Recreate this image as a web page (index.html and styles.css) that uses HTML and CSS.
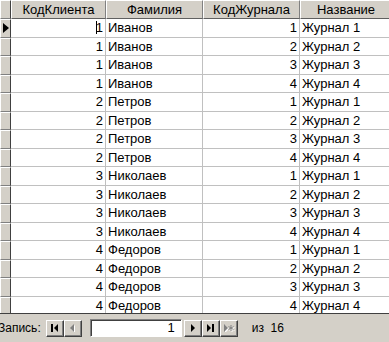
FILE: index.html
```html
<!DOCTYPE html>
<html>
<head>
<meta charset="utf-8">
<link rel="stylesheet" href="styles.css">
</head>
<body>
<div class="grid-wrap">
<table class="grid">
<colgroup><col class="c0"><col class="c1"><col class="c2"><col class="c3"><col class="c4"></colgroup>
<thead>
<tr><th class="sel"></th><th>КодКлиента</th><th>Фамилия</th><th>КодЖурнала</th><th>Название</th></tr>
</thead>
<tbody>
<tr><td class="sel cur"><span class="arrow"></span></td><td class="num"><span class="caret"></span>1</td><td>Иванов</td><td class="num">1</td><td>Журнал 1</td></tr>
<tr><td class="sel"></td><td class="num">1</td><td>Иванов</td><td class="num">2</td><td>Журнал 2</td></tr>
<tr><td class="sel"></td><td class="num">1</td><td>Иванов</td><td class="num">3</td><td>Журнал 3</td></tr>
<tr><td class="sel"></td><td class="num">1</td><td>Иванов</td><td class="num">4</td><td>Журнал 4</td></tr>
<tr><td class="sel"></td><td class="num">2</td><td>Петров</td><td class="num">1</td><td>Журнал 1</td></tr>
<tr><td class="sel"></td><td class="num">2</td><td>Петров</td><td class="num">2</td><td>Журнал 2</td></tr>
<tr><td class="sel"></td><td class="num">2</td><td>Петров</td><td class="num">3</td><td>Журнал 3</td></tr>
<tr><td class="sel"></td><td class="num">2</td><td>Петров</td><td class="num">4</td><td>Журнал 4</td></tr>
<tr><td class="sel"></td><td class="num">3</td><td>Николаев</td><td class="num">1</td><td>Журнал 1</td></tr>
<tr><td class="sel"></td><td class="num">3</td><td>Николаев</td><td class="num">2</td><td>Журнал 2</td></tr>
<tr><td class="sel"></td><td class="num">3</td><td>Николаев</td><td class="num">3</td><td>Журнал 3</td></tr>
<tr><td class="sel"></td><td class="num">3</td><td>Николаев</td><td class="num">4</td><td>Журнал 4</td></tr>
<tr><td class="sel"></td><td class="num">4</td><td>Федоров</td><td class="num">1</td><td>Журнал 1</td></tr>
<tr><td class="sel"></td><td class="num">4</td><td>Федоров</td><td class="num">2</td><td>Журнал 2</td></tr>
<tr><td class="sel"></td><td class="num">4</td><td>Федоров</td><td class="num">3</td><td>Журнал 3</td></tr>
<tr><td class="sel"></td><td class="num">4</td><td>Федоров</td><td class="num">4</td><td>Журнал 4</td></tr>
</tbody>
</table>
</div>
<div class="nav">
  <span class="label">Запись:</span>
  <span class="btn"><svg width="9" height="8" viewBox="0 0 9 8"><rect x="1" y="0" width="2" height="8" fill="#000"/><polygon points="8,0 8,8 4,4" fill="#000"/></svg></span>
  <span class="btn"><svg width="9" height="8" viewBox="0 0 9 8"><polygon points="6,0 6,8 2,4" fill="#fff" transform="translate(1,1)"/><polygon points="6,0 6,8 2,4" fill="#808080"/></svg></span>
  <span class="field">1</span>
  <span class="btn"><svg width="9" height="8" viewBox="0 0 9 8"><polygon points="3,0 3,8 7,4" fill="#000"/></svg></span>
  <span class="btn"><svg width="9" height="8" viewBox="0 0 9 8"><polygon points="1,0 1,8 5,4" fill="#000"/><rect x="6" y="0" width="2" height="8" fill="#000"/></svg></span>
  <span class="btn"><svg width="12" height="8" viewBox="0 0 12 8"><g transform="translate(1,1)" fill="#fff"><polygon points="1,0 1,8 5,4"/><path d="M8 1v6M5.5 2.5l5 3M10.5 2.5l-5 3" stroke="#fff" stroke-width="1"/></g><g fill="#808080"><polygon points="1,0 1,8 5,4"/><path d="M8 1v6M5.5 2.5l5 3M10.5 2.5l-5 3" stroke="#808080" stroke-width="1"/></g></svg></span>
  <span class="of">из&nbsp; 16</span>
</div>
</body>
</html>
```
FILE: styles.css
```css
html, body {
  margin: 0;
  padding: 0;
  background: #d4d0c8;
  width: 389px;
  height: 342px;
  overflow: hidden;
  font-family: "Liberation Sans", Arial, sans-serif;
  font-size: 13px;
  color: #000;
}
.grid-wrap {
  height: 313px;
  overflow: hidden;
  background: #fff;
  border-bottom: 1px solid #404040;
}
.grid {
  border-collapse: separate;
  border-spacing: 0;
  table-layout: fixed;
  width: 392px;
}
.c0 { width: 11px; }
.c1 { width: 95px; }
.c2 { width: 97px; }
.c3 { width: 97px; }
.c4 { width: 92px; }
th {
  height: 19px;
  padding: 0;
  background: #d4d0c8;
  font-weight: normal;
  text-align: center;
  border-top: 1px solid #fff;
  border-left: 1px solid #fff;
  border-right: 1px solid #808080;
  border-bottom: 1px solid #606060;
  box-sizing: border-box;
  line-height: 16px;
}
td {
  height: 18.5px;
  box-sizing: border-box;
  padding: 0 2px;
  border-right: 1px solid #c0c0c0;
  border-bottom: 1px solid #c0c0c0;
  white-space: nowrap;
  overflow: hidden;
  line-height: 17px;
}
td.num { text-align: right; }
td.sel, th.sel {
  background: #d4d0c8;
  padding: 0;
  border-top: 1px solid #fff;
  border-left: 1px solid #fff;
  border-right: 1px solid #404040;
  border-bottom: 1px solid #808080;
}
.arrow {
  display: block;
  width: 0;
  height: 0;
  margin-left: 2px;
  border-top: 5px solid transparent;
  border-bottom: 5px solid transparent;
  border-left: 6px solid #000;
}
.caret {
  display: inline-block;
  width: 1px;
  height: 13px;
  background: #000;
  vertical-align: -2px;
  margin-right: -1px;
}
.nav {
  display: flex;
  align-items: center;
  height: 28px;
}
.label {
  font-size: 12px;
  margin-left: -2px;
  margin-right: 5px;
}
.btn {
  display: flex;
  align-items: center;
  justify-content: center;
  width: 18px;
  height: 17px;
  box-sizing: border-box;
  border-top: 1px solid #fff;
  border-left: 1px solid #fff;
  border-right: 1px solid #404040;
  border-bottom: 1px solid #404040;
  box-shadow: inset -1px -1px 0 #808080;
}
.field {
  width: 92px;
  height: 18px;
  margin: 0 2px 0 8px;
  box-sizing: border-box;
  background: #fff;
  border-top: 1px solid #808080;
  border-left: 1px solid #808080;
  border-right: 1px solid #fff;
  border-bottom: 1px solid #fff;
  box-shadow: inset 1px 1px 0 #404040;
  text-align: right;
  padding-right: 6px;
  line-height: 16px;
}
.of {
  margin-left: 14px;
  font-size: 12px;
}
```
